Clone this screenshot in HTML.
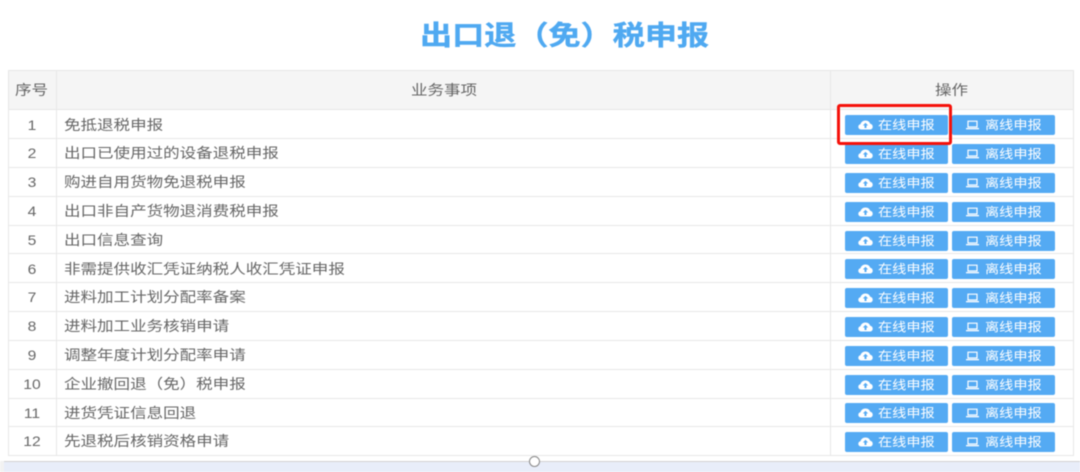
<!DOCTYPE html>
<html lang="zh">
<head>
<meta charset="utf-8">
<style>
html,body{margin:0;padding:0;background:#fff}
body{position:relative;width:1080px;height:472px;overflow:hidden;font-family:"Liberation Sans","Noto Sans CJK SC",sans-serif;color:#666}
#w{position:absolute;left:0;top:0;width:1080px;height:472px;filter:blur(.45px)}
.a{position:absolute}
.t{position:absolute;white-space:nowrap;transform-origin:0 0;transform:scaleX(1.18);font-size:14px;line-height:20px;color:#666}
.l{position:absolute;background:#e7e7e7}
.b{position:absolute;width:103px;height:20px;background:#54aaf3;border-radius:2px}
.b span{position:absolute;left:33px;top:0;white-space:nowrap;color:#fff;font-size:12px;line-height:20px;transform-origin:0 0;transform:scaleX(1.18)}
.b svg{position:absolute;left:13px;top:5px}
.n{position:absolute;left:8px;width:48px;text-align:center;font-size:14px;line-height:20px;color:#666;transform-origin:24px 0;transform:scaleX(1.12)}
</style>
</head>
<body>
<div id="w">
<div class="t" style="left:420px;top:19px;font-size:27px;line-height:34px;font-weight:700;color:#4fa9f1;-webkit-text-stroke:.4px #4fa9f1;transform:scaleX(1.19)">出口退（免）税申报</div>

<div class="a" style="left:8px;top:70px;width:1065px;height:39px;background:#f5f5f5"></div>
<div class="l" style="left:8px;top:70px;width:1065px;height:1px"></div>
<div class="l" style="left:8px;top:109px;width:1065px;height:1px"></div>
<div class="l" style="left:8px;top:138px;width:1065px;height:1px"></div>
<div class="l" style="left:8px;top:167px;width:1065px;height:1px"></div>
<div class="l" style="left:8px;top:196px;width:1065px;height:1px"></div>
<div class="l" style="left:8px;top:225px;width:1065px;height:1px"></div>
<div class="l" style="left:8px;top:253px;width:1065px;height:1px"></div>
<div class="l" style="left:8px;top:282px;width:1065px;height:1px"></div>
<div class="l" style="left:8px;top:311px;width:1065px;height:1px"></div>
<div class="l" style="left:8px;top:340px;width:1065px;height:1px"></div>
<div class="l" style="left:8px;top:369px;width:1065px;height:1px"></div>
<div class="l" style="left:8px;top:398px;width:1065px;height:1px"></div>
<div class="l" style="left:8px;top:426px;width:1065px;height:1px"></div>
<div class="l" style="left:8px;top:455px;width:1065px;height:1px"></div>
<div class="l" style="left:8px;top:70px;width:1px;height:386px"></div>
<div class="l" style="left:56px;top:70px;width:1px;height:386px"></div>
<div class="l" style="left:830px;top:70px;width:1px;height:386px"></div>
<div class="l" style="left:1073px;top:70px;width:1px;height:386px"></div>

<div class="t" style="left:15px;top:80px;">序号</div>
<div class="t" style="left:411px;top:80px;">业务事项</div>
<div class="t" style="left:935px;top:80px;">操作</div>

<div class="n" style="top:115px">1</div><div class="t" style="left:64px;top:115px">免抵退税申报</div>
<div class="n" style="top:143px">2</div><div class="t" style="left:64px;top:143px">出口已使用过的设备退税申报</div>
<div class="n" style="top:172px">3</div><div class="t" style="left:64px;top:172px">购进自用货物免退税申报</div>
<div class="n" style="top:201px">4</div><div class="t" style="left:64px;top:201px">出口非自产货物退消费税申报</div>
<div class="n" style="top:230px">5</div><div class="t" style="left:64px;top:230px">出口信息查询</div>
<div class="n" style="top:259px">6</div><div class="t" style="left:64px;top:259px">非需提供收汇凭证纳税人收汇凭证申报</div>
<div class="n" style="top:287px">7</div><div class="t" style="left:64px;top:287px">进料加工计划分配率备案</div>
<div class="n" style="top:316px">8</div><div class="t" style="left:64px;top:316px">进料加工业务核销申请</div>
<div class="n" style="top:345px">9</div><div class="t" style="left:64px;top:345px">调整年度计划分配率申请</div>
<div class="n" style="top:374px">10</div><div class="t" style="left:64px;top:374px">企业撤回退（免）税申报</div>
<div class="n" style="top:403px">11</div><div class="t" style="left:64px;top:403px">进货凭证信息回退</div>
<div class="n" style="top:431px">12</div><div class="t" style="left:64px;top:431px">先退税后核销资格申请</div>

<svg width="0" height="0" style="position:absolute"><defs>
<symbol id="c" viewBox="0 0 15 10"><path fill="#fff" d="M3.300 9.500C1.400 9.500 .3 8.200 .3 6.800c0-1.300.9-2.300 2.200-2.500C2.900 2.200 5 .5 7.500 .5c2.300 0 4.200 1.400 4.700 3.300 1.500.2 2.500 1.400 2.500 2.900 0 1.600-1.200 2.800-2.900 2.800z"/><path fill="#54aaf3" d="M7.500 2.800 4.900 5.500H6.500V8H8.500V5.500H10.100z"/></symbol>
<symbol id="m" viewBox="0 0 15 10"><path fill="none" stroke="#fff" stroke-width="1.200" d="M3 1.200h9v5.800H3z"/><path fill="#fff" d="M1 8h13v1.300H1z"/></symbol>
</defs></svg>

<div class="b" style="left:845px;top:115px"><svg width="15" height="10"><use href="#c"/></svg><span>在线申报</span></div><div class="b" style="left:952px;top:115px"><svg width="15" height="10"><use href="#m"/></svg><span>离线申报</span></div>
<div class="b" style="left:845px;top:144px"><svg width="15" height="10"><use href="#c"/></svg><span>在线申报</span></div><div class="b" style="left:952px;top:144px"><svg width="15" height="10"><use href="#m"/></svg><span>离线申报</span></div>
<div class="b" style="left:845px;top:173px"><svg width="15" height="10"><use href="#c"/></svg><span>在线申报</span></div><div class="b" style="left:952px;top:173px"><svg width="15" height="10"><use href="#m"/></svg><span>离线申报</span></div>
<div class="b" style="left:845px;top:202px"><svg width="15" height="10"><use href="#c"/></svg><span>在线申报</span></div><div class="b" style="left:952px;top:202px"><svg width="15" height="10"><use href="#m"/></svg><span>离线申报</span></div>
<div class="b" style="left:845px;top:231px"><svg width="15" height="10"><use href="#c"/></svg><span>在线申报</span></div><div class="b" style="left:952px;top:231px"><svg width="15" height="10"><use href="#m"/></svg><span>离线申报</span></div>
<div class="b" style="left:845px;top:259px"><svg width="15" height="10"><use href="#c"/></svg><span>在线申报</span></div><div class="b" style="left:952px;top:259px"><svg width="15" height="10"><use href="#m"/></svg><span>离线申报</span></div>
<div class="b" style="left:845px;top:288px"><svg width="15" height="10"><use href="#c"/></svg><span>在线申报</span></div><div class="b" style="left:952px;top:288px"><svg width="15" height="10"><use href="#m"/></svg><span>离线申报</span></div>
<div class="b" style="left:845px;top:317px"><svg width="15" height="10"><use href="#c"/></svg><span>在线申报</span></div><div class="b" style="left:952px;top:317px"><svg width="15" height="10"><use href="#m"/></svg><span>离线申报</span></div>
<div class="b" style="left:845px;top:346px"><svg width="15" height="10"><use href="#c"/></svg><span>在线申报</span></div><div class="b" style="left:952px;top:346px"><svg width="15" height="10"><use href="#m"/></svg><span>离线申报</span></div>
<div class="b" style="left:845px;top:375px"><svg width="15" height="10"><use href="#c"/></svg><span>在线申报</span></div><div class="b" style="left:952px;top:375px"><svg width="15" height="10"><use href="#m"/></svg><span>离线申报</span></div>
<div class="b" style="left:845px;top:403px"><svg width="15" height="10"><use href="#c"/></svg><span>在线申报</span></div><div class="b" style="left:952px;top:403px"><svg width="15" height="10"><use href="#m"/></svg><span>离线申报</span></div>
<div class="b" style="left:845px;top:432px"><svg width="15" height="10"><use href="#c"/></svg><span>在线申报</span></div><div class="b" style="left:952px;top:432px"><svg width="15" height="10"><use href="#m"/></svg><span>离线申报</span></div>

<div class="a" style="left:837px;top:104px;width:109px;height:35px;border:3px solid #f5110a;border-radius:3px"></div>

<div class="a" style="left:0;top:461px;width:1080px;height:11px;background:#e8edf9;border-top:1px solid #d2d2d2;box-sizing:border-box"></div>
<div class="a" style="left:0;top:461px;width:4px;height:11px;background:#f2f2f2"></div>
<div class="a" style="left:528.500px;top:455.500px;width:9px;height:9px;border:1.500px solid #888;border-radius:50%;background:#fff"></div>
</div>
</body>
</html>
